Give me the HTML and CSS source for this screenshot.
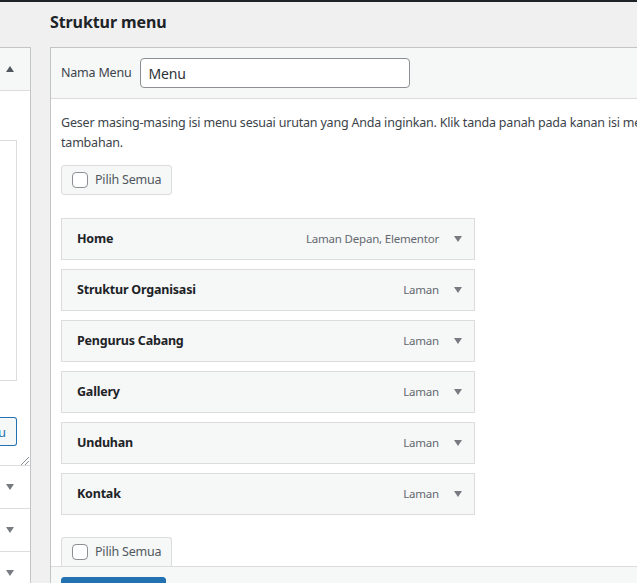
FILE: index.html
```html
<!DOCTYPE html>
<html lang="id">
<head>
    <meta charset="UTF-8">
    <meta name="viewport" content="width=device-width, initial-scale=1.0">
    <title>Menu</title>
    <link rel="stylesheet" href="styles.css">
</head>
<body>
    <div class="admin-bar"></div>

    <div class="nav-menus">
        <!-- Kolom kiri: tambah isi menu -->
        <div class="side-col">
            <div class="side-panel">
                <div class="side-head"><span class="arrow-up"></span></div>
                <div class="side-body">
                    <div class="side-list"></div>
                    <div class="side-actions">
                        <button class="btn-outline"><span>Tambahkan ke Menu</span></button>
                    </div>
                    <span class="resize-handle"></span>
                </div>
                <div class="side-section"><span class="arrow-down"></span></div>
                <div class="side-section"><span class="arrow-down"></span></div>
                <div class="side-section"><span class="arrow-down"></span></div>
            </div>
        </div>

        <!-- Kolom kanan: struktur menu -->
        <div class="main-col">
            <h2 class="title">Struktur menu</h2>
            <div class="menu-panel">
                <div class="menu-head">
                    <label for="menu-name">Nama Menu</label>
                    <input type="text" id="menu-name" value="Menu">
                </div>
                <div class="menu-body">
                    <p class="hint">Geser masing-masing isi menu sesuai urutan yang Anda inginkan. Klik tanda panah pada kanan isi menu untuk menampilkan pilihan pengaturan tambahan.</p>

                    <label class="select-all"><span class="check"></span>Pilih Semua</label>

                    <ul class="menu-items" id="menu-items"></ul>

                    <label class="select-all bottom"><span class="check"></span>Pilih Semua</label>
                </div>
                <div class="menu-foot">
                    <button class="btn-primary">Simpan Menu</button>
                </div>
            </div>
        </div>
    </div>

    <script>
        // Daftar isi menu
        const items = [
            { title: "Home", type: "Laman Depan, Elementor" },
            { title: "Struktur Organisasi", type: "Laman" },
            { title: "Pengurus Cabang", type: "Laman" },
            { title: "Gallery", type: "Laman" },
            { title: "Unduhan", type: "Laman" },
            { title: "Kontak", type: "Laman" }
        ];

        const list = document.getElementById("menu-items");
        items.forEach(item => {
            const li = document.createElement("li");
            li.className = "menu-item";
            li.innerHTML = `
                <span class="item-title">${item.title}</span>
                <span class="item-type">${item.type}</span>
                <span class="arrow-down"></span>
            `;
            list.appendChild(li);
        });
    </script>
</body>
</html>
```

FILE: styles.css
```css
/* Reset */
* {
    margin: 0;
    padding: 0;
    box-sizing: border-box;
}

html, body {
    overflow: hidden;
}

body {
    font-family: 'Noto Sans', 'Open Sans', sans-serif;
    font-size: 12.5px;
    letter-spacing: -0.2px;
    line-height: 1.56;
    background-color: #f0f0f1;
    color: #3c434a;
    width: 637px;
    height: 583px;
}

.admin-bar {
    height: 2px;
    background: #1d2327;
}

.nav-menus {
    display: flex;
    gap: 19px;
}

/* Kolom kiri */
.side-col {
    flex: none;
    width: 31px;
    overflow: hidden;
    padding-top: 45px;
}

.side-panel {
    width: 31px;
    height: 560px;
    background: #fff;
    border: 1px solid #c3c4c7;
    border-left: none;
}

.side-head {
    height: 43px;
    background: #f6f7f7;
    border-bottom: 1px solid #dcdcde;
    display: flex;
    align-items: center;
    padding-left: 6px;
}

.side-body {
    height: 374px;
    position: relative;
    padding-top: 49px;
}

.side-list {
    width: 17px;
    height: 241px;
    border: 1px solid #dcdcde;
    border-left: none;
}

.side-actions {
    margin-top: 36px;
}

.btn-outline {
    display: flex;
    justify-content: flex-end;
    align-items: center;
    width: 17px;
    height: 29px;
    background: #f6f7f7;
    border: 1px solid #2271b1;
    border-left: none;
    border-radius: 0 3px 3px 0;
    color: #2271b1;
    font-family: inherit;
    font-size: 13px;
    overflow: hidden;
    white-space: nowrap;
    padding-right: 10px;
}

.btn-outline span {
    flex: none;
}

.resize-handle {
    position: absolute;
    right: 1px;
    bottom: 0;
    width: 8px;
    height: 8px;
    background: linear-gradient(135deg, transparent 45%, #8c8f94 45%, #8c8f94 52%, transparent 52%, transparent 70%, #8c8f94 70%, #8c8f94 77%, transparent 77%);
}

.side-section {
    height: 43px;
    border-top: 1px solid #dcdcde;
    display: flex;
    align-items: center;
    padding-left: 6px;
}

.arrow-up,
.arrow-down {
    display: inline-block;
    width: 0;
    height: 0;
    border-left: 4.5px solid transparent;
    border-right: 4.5px solid transparent;
}

.arrow-up {
    border-bottom: 6px solid #50575e;
}

.arrow-down {
    border-top: 6px solid #787c82;
}

/* Kolom kanan */
.main-col {
    flex: none;
    width: 1000px;
}

.title {
    font-size: 16px;
    font-weight: 700;
    letter-spacing: -0.1px;
    color: #1d2327;
    line-height: 1.3;
    padding-top: 10px;
    height: 45px;
}

.menu-panel {
    background: #fff;
    border: 1px solid #c3c4c7;
}

.menu-head {
    display: flex;
    align-items: center;
    gap: 8px;
    height: 51px;
    padding: 0 10px;
    background: #f6f7f7;
    border-bottom: 1px solid #dcdcde;
}

.menu-head label {
    color: #3c434a;
}

.menu-head input {
    width: 270px;
    height: 30px;
    padding: 0 8px;
    border: 1px solid #8c8f94;
    border-radius: 4px;
    font-family: inherit;
    font-size: 14px;
    letter-spacing: -0.2px;
    color: #2c3338;
    background: #fff;
}

.menu-body {
    padding: 0 10px;
}

.hint {
    width: 860px;
    margin: 14px 0 13px;
}

.select-all {
    display: inline-flex;
    align-items: center;
    gap: 7px;
    height: 30px;
    padding: 0 10px;
    background: #f6f7f7;
    border: 1px solid #dcdcde;
    border-radius: 3px;
    color: #50575e;
}

.select-all.bottom {
    margin-top: 22px;
    height: 29px;
    border-bottom: none;
    border-radius: 3px 3px 0 0;
}

.check {
    width: 16px;
    height: 16px;
    border: 1px solid #8c8f94;
    border-radius: 4px;
    background: #fff;
}

.menu-items {
    list-style: none;
    margin-top: 23px;
}

.menu-item {
    width: 414px;
    height: 42px;
    margin-bottom: 9px;
    display: flex;
    align-items: center;
    padding: 0 12px 0 15px;
    background: #f6f7f7;
    border: 1px solid #dcdcde;
}

.menu-item:last-child {
    margin-bottom: 0;
}

.item-title {
    flex: 1;
    font-weight: 700;
    color: #1d2327;
}

.item-type {
    font-size: 11.5px;
    color: #646970;
    margin-right: 15px;
}

.menu-foot {
    height: 50px;
    padding: 10px;
    background: #f6f7f7;
    border-top: 1px solid #dcdcde;
}

.btn-primary {
    width: 105px;
    height: 32px;
    background: #2271b1;
    border: 1px solid #2271b1;
    border-radius: 3px;
    color: #fff;
    font-family: inherit;
    font-size: 13px;
}
```
